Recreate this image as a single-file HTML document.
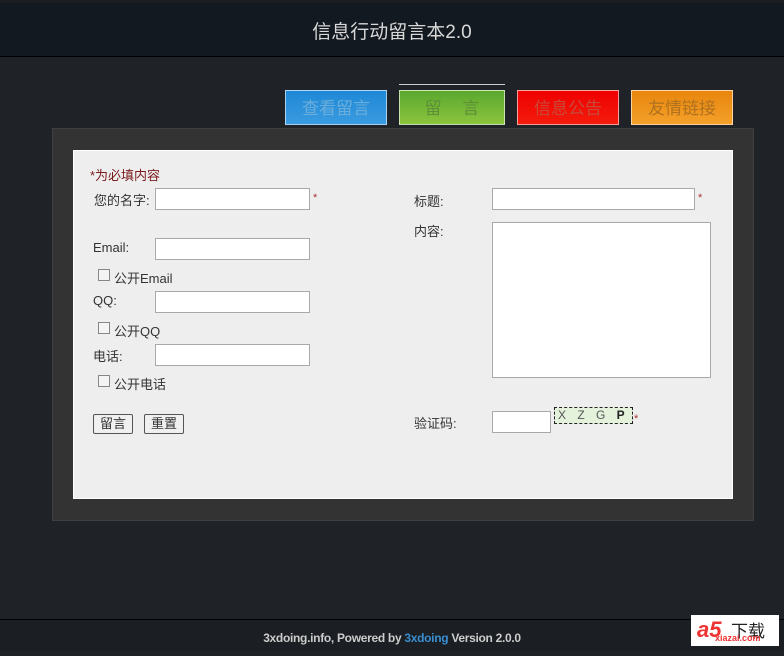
<!DOCTYPE html>
<html><head><meta charset="utf-8"><style>
*{margin:0;padding:0;box-sizing:border-box}
body{width:784px;height:651px;background:#1f2226;position:relative;overflow:hidden;font-family:"Liberation Sans","Noto Sans CJK SC",sans-serif;font-size:13px;color:#333}
.a{position:absolute}
.hd{left:0;top:0;width:784px;height:57px;background:#131920;border-top:3px solid #1c1d1f;border-bottom:1px solid #000}
.hd div{position:absolute;left:0;right:0;top:14px;text-align:center;color:#d8d8d8;font-size:19px}
.tab{top:90px;height:35px;border:1px solid rgba(255,255,255,.6);text-align:center;line-height:31px;font-size:17px;font-family:"Noto Sans CJK SC",sans-serif}
.panel{left:52px;top:128px;width:702px;height:393px;background:#333;border:1px solid #3f3f3f}
.inner{left:73px;top:150px;width:660px;height:349px;background:#eee;border:1px solid #fff}
.in{position:absolute;height:22px;background:#fff;border:1px solid #a9a9a9}
.lb{position:absolute;font-size:13px;color:#333;white-space:nowrap}
.cb{position:absolute;width:12px;height:12px;border:1px solid #888;background:#f4f4f4}
.st{position:absolute;color:#a33;font-size:11px}
.btn{position:absolute;height:20px;border:1px solid #555;background:#f0f0f0;border-radius:2px;font-size:13px;line-height:17px;text-align:center}
.ft{left:0;top:619px;width:784px;height:32px;background:#1b1e22;border-top:1px solid #000;text-align:center;color:#ccc;font-size:12px;font-weight:bold;line-height:36px;letter-spacing:-0.3px}
</style></head><body>
<div class="a hd"><div>信息行动留言本2.0</div></div>
<div class="a" style="left:399px;top:84px;width:106px;height:1px;background:#ccc"></div>
<div class="a tab" style="left:285px;width:102px;background:linear-gradient(#1f88d6,#3a9be0);color:#6aaedc">查看留言</div>
<div class="a tab" style="left:399px;width:106px;background:linear-gradient(#5aa82e,#8cc43e);color:#5c8f36">留　 言</div>
<div class="a tab" style="left:517px;width:102px;background:linear-gradient(#e00,#f41c0c);color:#c84a3a">信息公告</div>
<div class="a tab" style="left:631px;width:102px;background:linear-gradient(#e8860e,#f4a02a);color:#b0711c">友情链接</div>
<div class="a panel"></div>
<div class="a inner">
<div class="lb" style="left:16px;top:14px;color:#7a1a1a">*为必填内容</div>
<div class="lb" style="left:20px;top:39px">您的名字:</div>
<div class="in" style="left:81px;top:37px;width:155px"></div><div class="st" style="left:239px;top:41px">*</div>
<div class="lb" style="left:19px;top:89px">Email:</div>
<div class="in" style="left:81px;top:87px;width:155px"></div>
<div class="cb" style="left:24px;top:118px"></div><div class="lb" style="left:40px;top:117px">公开Email</div>
<div class="lb" style="left:19px;top:142px">QQ:</div>
<div class="in" style="left:81px;top:140px;width:155px"></div>
<div class="cb" style="left:24px;top:171px"></div><div class="lb" style="left:40px;top:170px">公开QQ</div>
<div class="lb" style="left:19px;top:195px">电话:</div>
<div class="in" style="left:81px;top:193px;width:155px"></div>
<div class="cb" style="left:24px;top:224px"></div><div class="lb" style="left:40px;top:223px">公开电话</div>
<div class="btn" style="left:19px;top:263px;width:40px">留言</div>
<div class="btn" style="left:70px;top:263px;width:40px">重置</div>
<div class="lb" style="left:340px;top:40px">标题:</div>
<div class="in" style="left:418px;top:37px;width:203px"></div><div class="st" style="left:624px;top:41px">*</div>
<div class="lb" style="left:340px;top:70px">内容:</div>
<div class="in" style="left:418px;top:71px;width:219px;height:156px"></div>
<div class="lb" style="left:340px;top:262px">验证码:</div>
<div class="in" style="left:418px;top:260px;width:59px"></div>
<div class="a" style="left:480px;top:256px;width:79px;height:17px;background:#e4f2dc;border:1px dashed #222;font-size:12px;color:#555;letter-spacing:4px;line-height:15px;padding-left:3px;white-space:nowrap">X Z G <b style="color:#222">P</b></div>
<div class="st" style="left:560px;top:262px">*</div>
</div>
<div class="a ft">3xdoing.info, Powered by <span style="color:#3a8ed0">3xdoing</span> Version 2.0.0</div>
<div class="a" style="left:691px;top:615px;width:88px;height:31px;background:#fff"><span style="position:absolute;left:6px;top:2px;color:#e33;font-weight:bold;font-size:22px;font-style:italic">a5</span><span style="position:absolute;left:40px;top:2px;color:#222;font-size:17px">下载</span><span style="position:absolute;left:24px;top:18px;color:#e33;font-size:9px;font-weight:bold">xiazai.com</span></div>
</body></html>
